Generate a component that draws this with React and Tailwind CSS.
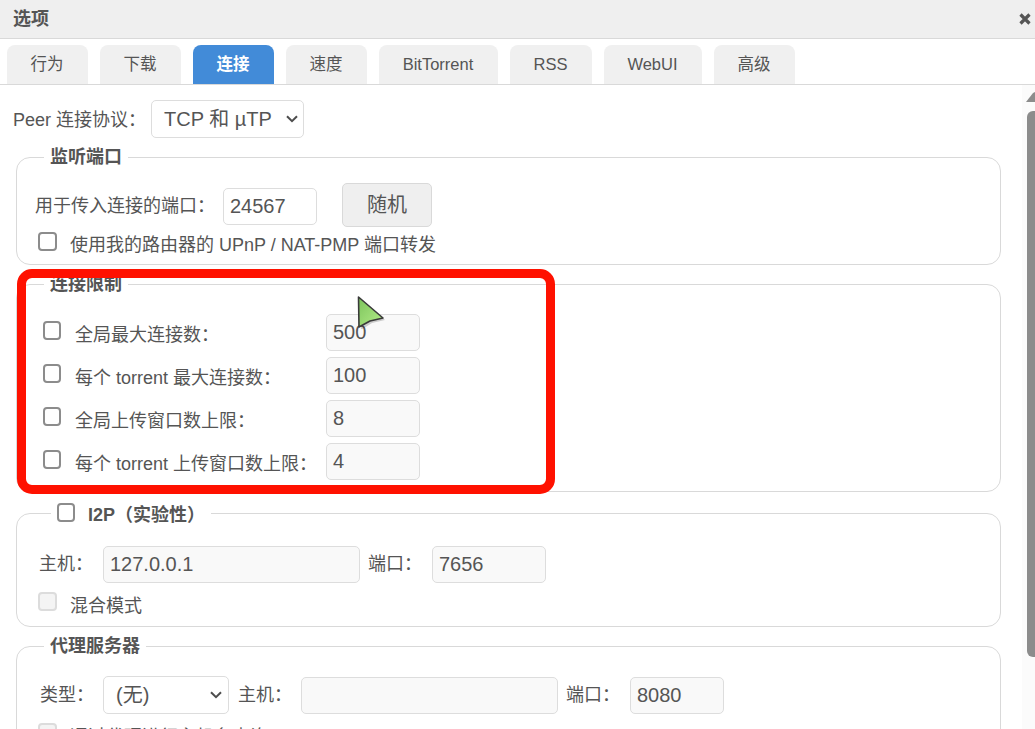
const FONT = "font-['Liberation_Sans','Noto_Sans_CJK_SC',sans-serif]";

function Check({ className = "", disabled = false }) {
  return (
    <span
      className={
        "block shrink-0 w-[18px] h-[18px] rounded-[4px] border-2 " +
        (disabled ? "border-[#dcdcdc] bg-[#f4f4f4] " : "border-[#8c8c8c] bg-white ") +
        className
      }
    />
  );
}

function Field({ value = "", className = "", muted = true }) {
  return (
    <div
      className={
        "h-[37px] rounded-[5px] border border-[#dddddd] pl-[6px] text-[20px] leading-[35px] text-[#555555] " +
        (muted ? "bg-[#f9f9f9] " : "bg-white ") +
        className
      }
    >
      {value}
    </div>
  );
}

function Chevron({ className = "" }) {
  return (
    <svg viewBox="0 0 12 8" className={"w-[12px] h-[8px] " + className} fill="none" stroke="#4d4d4d" strokeWidth="2">
      <path d="M1 1.2 L6 6.2 L11 1.2" />
    </svg>
  );
}

function Box({ legend, className = "", legendClass = "", children }) {
  return (
    <fieldset className={"mx-[16px] rounded-[14px] border border-[#d9d9d9] " + className}>
      <legend className={"ml-[27px] px-[6px] text-[18px] font-bold text-[#555555] leading-[18px] " + legendClass}>
        {legend}
      </legend>
      {children}
    </fieldset>
  );
}

function LimitRow({ label, value }) {
  return (
    <div className="flex items-start h-[43px]">
      <Check className="ml-[26px] mt-[7px] !h-[19px]" />
      <span className="ml-[14px] w-[251px] mt-[10px] text-[18px] leading-[22px] text-[#555555] whitespace-nowrap">{label}</span>
      <Field value={value} className="w-[94px]" />
    </div>
  );
}

const TABS = [
  ["行为", "w-[81px]"],
  ["下载", "w-[81px]"],
  ["连接", "w-[81px]", true],
  ["速度", "w-[81px]"],
  ["BitTorrent", "w-[119px]"],
  ["RSS", "w-[82px]"],
  ["WebUI", "w-[98px]"],
  ["高级", "w-[81px]"],
];

export default function App() {
  return (
    <div className={"relative w-[1035px] h-[729px] overflow-hidden bg-white flex flex-col " + FONT}>
      <header className="h-[39px] shrink-0 bg-[#efefef] border-b border-[#d9d9d9] flex items-center justify-between pl-[13px] pr-[4px]">
        <span className="text-[18px] font-bold text-[#555555]">选项</span>
        <svg viewBox="0 0 12 12" className="w-[12px] h-[12px]" fill="none" stroke="#555555" strokeWidth="3.2">
          <path d="M1.5 1.5 L10.5 10.5 M10.5 1.5 L1.5 10.5" />
        </svg>
      </header>

      <nav className="h-[46px] shrink-0 border-b border-[#d9d9d9] flex items-end gap-[12px] pl-[7px]">
        {TABS.map(([label, width, active]) => (
          <div
            key={label}
            className={
              "h-[39px] rounded-t-[8px] text-center text-[16.5px] leading-[39px] pr-[1px] " +
              width +
              (active ? " bg-[#428bd8] text-white font-bold" : " bg-[#f0f0f0] text-[#555555]")
            }
          >
            {label}
          </div>
        ))}
      </nav>

      <div className="flex flex-1 min-h-0">
        <main className="flex-1 min-w-0 overflow-hidden">
          <div className="h-[63px] flex items-start pt-[15px] pl-[13px]">
            <span className="text-[18px] leading-[41px] text-[#555555] w-[138px] whitespace-nowrap">Peer 连接协议：</span>
            <div className="w-[153px] h-[38px] rounded-[5px] border border-[#dddddd] flex items-center justify-between pl-[12px] pr-[5px] text-[20px] text-[#555555]">
              <span>TCP 和 µTP</span>
              <Chevron />
            </div>
          </div>

          <Box legend="监听端口" className="h-[117px] w-[985px]">
            <div className="flex items-start pl-[18px] pt-[17px]">
              <span className="text-[18px] leading-[22px] mt-[12px] w-[188px] text-[#555555] whitespace-nowrap">用于传入连接的端口：</span>
              <Field value="24567" className="w-[94px] mt-[5px]" muted={false} />
              <div className="ml-[25px] w-[90px] h-[44px] rounded-[5px] border border-[#d9d9d9] bg-[#efefef] text-center text-[20px] leading-[42px] text-[#555555]">
                随机
              </div>
            </div>
            <div className="flex items-start pl-[21px] mt-[5px] h-[24px]">
              <Check className="!w-[19px] !h-[19px]" />
              <span className="ml-[13px] mt-[2px] text-[18px] leading-[22px] text-[#555555] whitespace-nowrap">使用我的路由器的 UPnP / NAT-PMP 端口转发</span>
            </div>
          </Box>

          <Box legend="连接限制" className="h-[217px] w-[985px] mt-[10px]">
            <div className="pt-[21px]">
              <LimitRow label="全局最大连接数：" value="500" />
              <LimitRow label="每个 torrent 最大连接数：" value="100" />
              <LimitRow label="全局上传窗口数上限：" value="8" />
              <LimitRow label="每个 torrent 上传窗口数上限：" value="4" />
            </div>
          </Box>

          <Box
            className="h-[124px] w-[985px] mt-[11px]"
            legendClass="!ml-[34px]"
            legend={
              <span className="flex items-center h-[21px]">
                <Check className="!w-[18px] !h-[19px] -mt-[2px]" />
                <span className="ml-[13px] mt-[3px]">I2P（实验性）</span>
              </span>
            }
          >
            <div className="flex items-start pl-[22px] pt-[22px]">
              <span className="w-[64px] text-[18px] leading-[36px] text-[#555555] whitespace-nowrap">主机：</span>
              <Field value="127.0.0.1" className="w-[257px]" />
              <span className="ml-[8px] w-[64px] text-[18px] leading-[36px] text-[#555555] whitespace-nowrap">端口：</span>
              <Field value="7656" className="w-[114px]" />
            </div>
            <div className="flex items-start pl-[21px] mt-[9px] h-[24px]">
              <Check disabled className="!w-[19px] !h-[19px]" />
              <span className="ml-[13px] mt-[3px] text-[18px] leading-[22px] text-[#555555] whitespace-nowrap">混合模式</span>
            </div>
          </Box>

          <Box legend="代理服务器" className="h-[120px] w-[985px] mt-[10px]">
            <div className="flex items-start pl-[23px] pt-[22px]">
              <span className="w-[63px] text-[18px] leading-[36px] text-[#555555] whitespace-nowrap">类型：</span>
              <div className="w-[126px] h-[38px] -mt-[1px] rounded-[5px] border border-[#dddddd] flex items-center justify-between pl-[12px] pr-[6px] text-[20px] text-[#555555]">
                <span>(无)</span>
                <Chevron />
              </div>
              <span className="ml-[9px] w-[63px] text-[18px] leading-[36px] text-[#555555] whitespace-nowrap">主机：</span>
              <Field className="w-[257px]" />
              <span className="ml-[8px] w-[64px] text-[18px] leading-[36px] text-[#555555] whitespace-nowrap">端口：</span>
              <Field value="8080" className="w-[94px]" />
            </div>
            <div className="flex items-start pl-[21px] mt-[9px]">
              <Check disabled className="!w-[19px] !h-[19px]" />
              <span className="ml-[13px] mt-[3px] text-[18px] leading-[22px] text-[#555555] whitespace-nowrap">通过代理进行主机名查询</span>
            </div>
          </Box>
        </main>

        <aside className="w-[13px] shrink-0 bg-[#fbfbfb] flex flex-col items-end overflow-hidden">
          <svg viewBox="0 0 9 10" className="w-[9px] h-[10px] mt-[7px] shrink-0" fill="#8c8c8c">
            <path d="M0 10 L7 1 L9 0 L9 10 Z" />
          </svg>
          <div className="w-[8px] h-[546px] mt-[9px] shrink-0 rounded-l-[6px] bg-[#8c8c8c]" />
        </aside>
      </div>

      <div className="absolute left-[17px] top-[269px] w-[538px] h-[225px] rounded-[15px] border-[9px] border-[#ff1100] pointer-events-none" />

      <svg viewBox="0 0 30 36" className="absolute left-[355px] top-[293px] w-[30px] h-[36px]">
        <defs>
          <linearGradient id="cur" x1="0" y1="0" x2="1" y2="1">
            <stop offset="0" stopColor="#7cc45c" />
            <stop offset="1" stopColor="#b4ec88" />
          </linearGradient>
        </defs>
        <path d="M4 4 L29 26 L16 29 L5 36 Z" fill="#000000" opacity="0.18" transform="translate(1 1)" />
        <path d="M3.5 4 L28 25 L15 28 L4 34 Z" fill="url(#cur)" stroke="#3a3a3a" strokeWidth="1.6" strokeLinejoin="round" />
      </svg>
    </div>
  );
}
